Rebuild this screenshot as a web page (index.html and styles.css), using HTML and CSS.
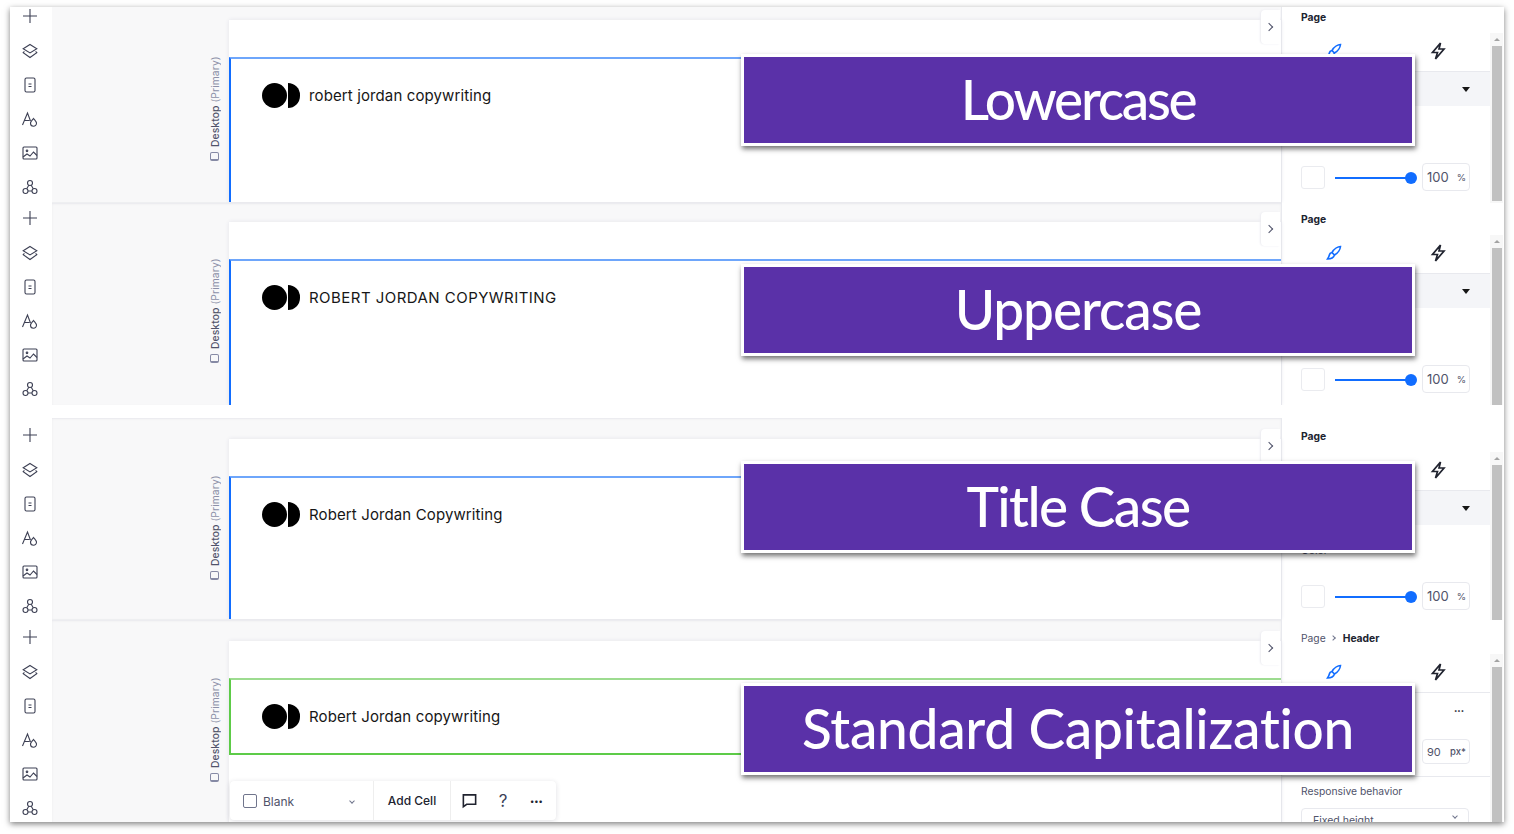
FILE: index.html
```html
<!DOCTYPE html>
<html lang="en">
<head>
<meta charset="utf-8">
<title>Header capitalization comparison</title>
<link rel="stylesheet" href="styles.css">
</head>
<body>
<svg class="sprite" aria-hidden="true">
  <symbol id="i-plus" viewBox="0 0 18 18"><path d="M9 2v14M2 9h14"/></symbol>
  <symbol id="i-layers" viewBox="0 0 18 18"><path d="M9 2.500l6.800 4.200L9 10.900 2.200 6.700zM3.400 9.400L2.200 10.600 9 15.500l6.800-4.900-1.200-1.200"/></symbol>
  <symbol id="i-page" viewBox="0 0 18 18"><rect x="4" y="2" width="10" height="14" rx="1.500"/><path d="M7.500 8h3M7.500 10.500h3"/></symbol>
  <symbol id="i-type" viewBox="0 0 18 18"><path d="M1.500 15L6.500 3l3 8M3.500 10.500h5"/><path d="M12.500 8.500c1.500 2 3 3.200 3 4.800a3 3 0 0 1-6 0c0-1.600 1.500-2.800 3-4.800z"/></symbol>
  <symbol id="i-image" viewBox="0 0 18 18"><rect x="2" y="3" width="14" height="12" rx="1"/><circle cx="6" cy="6.800" r=".8"/><path d="M2 13l4-3 3 2 3.500-4 3.500 3.500"/></symbol>
  <symbol id="i-apps" viewBox="0 0 18 18"><circle cx="9" cy="5" r="2.500"/><circle cx="4.500" cy="13" r="2.500"/><circle cx="13.500" cy="13" r="2.500"/><path d="M7.800 7.200L5.700 10.800M10.200 7.200l2.100 3.600M7 13h4"/></symbol>
  <symbol id="i-brush" viewBox="0 0 18 18"><path d="M15.500 2.500c-2.500.2-6.500 2.500-8.500 6l2.500 2.500c3.500-2 5.800-6 6-8.500zM7 8.500c-2 .3-2.500 1.500-2.800 3-.2 1-.7 2-1.700 3.500 3 0 6-1 7-4"/></symbol>
  <symbol id="i-bolt" viewBox="0 0 18 18"><path d="M11.500 1L3.500 10.500h5L6.500 17l8.500-10h-5z"/></symbol>
  <symbol id="i-comment" viewBox="0 0 18 18"><path d="M2.500 3h13v10H6l-3.500 2.500z"/></symbol>
</svg>

<main class="window">

  <section class="panel p1">
    <nav class="rail">
      <svg class="ico"><use href="#i-plus"/></svg><svg class="ico"><use href="#i-layers"/></svg><svg class="ico"><use href="#i-page"/></svg><svg class="ico"><use href="#i-type"/></svg><svg class="ico"><use href="#i-image"/></svg><svg class="ico"><use href="#i-apps"/></svg>
    </nav>
    <div class="canvas">
      <div class="device"><span class="device-ico"></span><span class="device-text"><b>Desktop</b> (Primary)</span></div>
      <div class="card">
        <header class="site-header blue">
          <span class="logo"><i class="dot"></i><i class="half"></i></span>
          <span class="brand">robert jordan copywriting</span>
        </header>
      </div>
      <button class="collapse"><span class="chev"></span></button>
    </div>
    <aside class="props">
      <div class="props-main">
        <div class="crumb"><b>Page</b></div>
        <div class="tabs"><span class="tab"><svg class="tab-ico brush"><use href="#i-brush"/></svg></span><span class="tab"><svg class="tab-ico bolt"><use href="#i-bolt"/></svg></span></div>
        <div class="select-row"><span class="caret"></span></div>
        <div class="color-label">Color</div>
        <div class="opacity-row">
          <span class="swatch"></span>
          <span class="slider"><i class="knob"></i></span>
          <span class="num"><span>100</span><small>%</small></span>
        </div>
      </div>
      <div class="scrollbar"><span class="arrow"></span><span class="thumb"></span></div>
    </aside>
  </section>

  <section class="panel p2">
    <nav class="rail">
      <svg class="ico"><use href="#i-plus"/></svg><svg class="ico"><use href="#i-layers"/></svg><svg class="ico"><use href="#i-page"/></svg><svg class="ico"><use href="#i-type"/></svg><svg class="ico"><use href="#i-image"/></svg><svg class="ico"><use href="#i-apps"/></svg>
    </nav>
    <div class="canvas">
      <div class="device"><span class="device-ico"></span><span class="device-text"><b>Desktop</b> (Primary)</span></div>
      <div class="card">
        <header class="site-header blue">
          <span class="logo"><i class="dot"></i><i class="half"></i></span>
          <span class="brand brand-upper">ROBERT JORDAN COPYWRITING</span>
        </header>
      </div>
      <button class="collapse"><span class="chev"></span></button>
    </div>
    <aside class="props">
      <div class="props-main">
        <div class="crumb"><b>Page</b></div>
        <div class="tabs"><span class="tab"><svg class="tab-ico brush"><use href="#i-brush"/></svg></span><span class="tab"><svg class="tab-ico bolt"><use href="#i-bolt"/></svg></span></div>
        <div class="select-row"><span class="caret"></span></div>
        <div class="color-label">Color</div>
        <div class="opacity-row">
          <span class="swatch"></span>
          <span class="slider"><i class="knob"></i></span>
          <span class="num"><span>100</span><small>%</small></span>
        </div>
      </div>
      <div class="scrollbar"><span class="arrow"></span><span class="thumb"></span></div>
    </aside>
  </section>

  <section class="panel p3">
    <nav class="rail">
      <svg class="ico"><use href="#i-plus"/></svg><svg class="ico"><use href="#i-layers"/></svg><svg class="ico"><use href="#i-page"/></svg><svg class="ico"><use href="#i-type"/></svg><svg class="ico"><use href="#i-image"/></svg><svg class="ico"><use href="#i-apps"/></svg>
    </nav>
    <div class="canvas">
      <div class="device"><span class="device-ico"></span><span class="device-text"><b>Desktop</b> (Primary)</span></div>
      <div class="card">
        <header class="site-header blue">
          <span class="logo"><i class="dot"></i><i class="half"></i></span>
          <span class="brand">Robert Jordan Copywriting</span>
        </header>
      </div>
      <button class="collapse"><span class="chev"></span></button>
    </div>
    <aside class="props">
      <div class="props-main">
        <div class="crumb"><b>Page</b></div>
        <div class="tabs"><span class="tab"><svg class="tab-ico brush"><use href="#i-brush"/></svg></span><span class="tab"><svg class="tab-ico bolt"><use href="#i-bolt"/></svg></span></div>
        <div class="select-row"><span class="caret"></span></div>
        <div class="color-label">Color</div>
        <div class="opacity-row">
          <span class="swatch"></span>
          <span class="slider"><i class="knob"></i></span>
          <span class="num"><span>100</span><small>%</small></span>
        </div>
      </div>
      <div class="scrollbar"><span class="arrow"></span><span class="thumb"></span></div>
    </aside>
  </section>

  <section class="panel p4">
    <nav class="rail">
      <svg class="ico"><use href="#i-plus"/></svg><svg class="ico"><use href="#i-layers"/></svg><svg class="ico"><use href="#i-page"/></svg><svg class="ico"><use href="#i-type"/></svg><svg class="ico"><use href="#i-image"/></svg><svg class="ico"><use href="#i-apps"/></svg>
    </nav>
    <div class="canvas">
      <div class="device"><span class="device-ico"></span><span class="device-text"><b>Desktop</b> (Primary)</span></div>
      <div class="card">
        <header class="site-header green">
          <span class="logo"><i class="dot"></i><i class="half"></i></span>
          <span class="brand">Robert Jordan copywriting</span>
        </header>
        <div class="toolbar">
          <div class="tool tool-blank"><span class="check"></span><span class="blank-label">Blank</span><span class="mini-chev"></span></div>
          <div class="tool tool-add">Add Cell</div>
          <div class="tool tool-icons"><svg class="tb-ico"><use href="#i-comment"/></svg><span class="help">?</span><span class="dots">&#8226;&#8226;&#8226;</span></div>
        </div>
      </div>
      <button class="collapse"><span class="chev"></span></button>
    </div>
    <aside class="props">
      <div class="props-main">
        <div class="crumb"><span class="crumb-parent">Page</span><span class="crumb-sep"></span><b>Header</b></div>
        <div class="tabs"><span class="tab"><svg class="tab-ico brush"><use href="#i-brush"/></svg></span><span class="tab"><svg class="tab-ico bolt"><use href="#i-bolt"/></svg></span></div>
        <div class="size-head"><span class="dots small">&#8226;&#8226;&#8226;</span></div>
        <div class="size-row"><span class="num num-px"><span>90</span><small>px*</small></span></div>
        <div class="resp-label">Responsive behavior</div>
        <div class="resp-select"><span class="resp-value">Fixed height</span><span class="mini-chev"></span></div>
      </div>
      <div class="scrollbar"><span class="arrow"></span><span class="thumb"></span></div>
    </aside>
  </section>

  <div class="tag tag1">Lowercase</div>
  <div class="tag tag2">Uppercase</div>
  <div class="tag tag3">Title Case</div>
  <div class="tag tag4">Standard Capitalization</div>
</main>
</body>
</html>
```

FILE: styles.css
```css
* { box-sizing: border-box; }
html, body { margin: 0; height: 100%; background: #fff; overflow: hidden; }
body { padding: 7px 10px 0; font-family: Inter, "Noto Sans", sans-serif; color: #20232f; }
.sprite { display: none; }

.window {
  position: relative;
  width: 1494px;
  height: 815px;
  background: #fff;
  box-shadow: 0 2px 6px rgba(0, 0, 0, .5);
  display: flex;
  flex-direction: column;
}

.panel {
  --o: 0px;
  display: grid;
  grid-template-columns: 42px 1fr 223px;
  height: 202px;
  overflow: hidden;
  flex: none;
}
.p1 { height: 196px; }
.p2 { --o: 6px; }
.p3 { --o: 8px; margin-top: 13px; }
.p4 { --o: 8px; }

/* left rail */
.rail {
  display: flex;
  flex-direction: column;
  align-items: center;
  padding-top: var(--o);
  padding-right: 2px;
  gap: 16px;
  background: #fff;
}
.ico {
  width: 18px;
  height: 18px;
  flex: none;
  fill: none;
  stroke: #3d4054;
  stroke-width: 1.100;
}
.ico:first-child { margin-bottom: 1px; }

/* canvas */
.canvas {
  position: relative;
  display: flex;
  padding-left: 157px;
  padding-top: var(--o);
  background: #f8f8f9;
}
.p1 .canvas, .p3 .canvas { border-bottom: 1px solid #eeeff1; }
.p2 .canvas, .p3 .canvas, .p4 .canvas { box-shadow: inset 0 1px 2px #e8e8ec; }

.device {
  flex: none;
  width: 12px;
  height: 104px;
  margin-top: 50px;
  margin-right: 8px;
  display: flex;
  align-items: center;
  gap: 5px;
  writing-mode: vertical-rl;
  transform: rotate(180deg);
  font-size: 10.300px;
  letter-spacing: .1px;
  line-height: 12px;
  color: #8c90a8;
  white-space: nowrap;
}
.device b { font-weight: 500; color: #50536a; }
.device-ico {
  flex: none;
  width: 9px;
  height: 9px;
  border: 1px solid #868aa5;
  border-top-width: 2px;
  border-radius: 2px;
}

.card {
  flex: 1;
  margin-top: 13px;
  padding-top: 37px;
  background: #fff;
  box-shadow: 0 0 4px #e3e3ea;
  display: flex;
  flex-direction: column;
}
.site-header {
  display: flex;
  align-items: flex-start;
  padding: 24px 0 0 31px;
  flex: 1;
  border-top: 2px solid #6ea6fb;
  border-left: 2px solid #116dff;
}
.site-header.green {
  flex: none;
  height: 77px;
  border: 2px solid #5dcb48;
  border-top-color: #9ddc90;
  border-right: 0;
}
.logo { display: flex; gap: 1px; flex: none; }
.dot { width: 25px; height: 25px; border-radius: 50%; background: #000; }
.half { width: 12px; height: 25px; border-radius: 0 13px 13px 0; background: #000; }
.brand { margin-left: 9px; font-size: 15px; letter-spacing: .12px; line-height: 25px; color: #161616; white-space: nowrap; }
.brand-upper { letter-spacing: .46px; }

.collapse {
  position: absolute;
  right: 1px;
  top: calc(var(--o) + 3px);
  width: 19px;
  height: 34px;
  padding: 0;
  border: 0;
  border-radius: 4px 0 0 4px;
  background: #fff;
  box-shadow: -1px 0 2px #ececf1;
}
.chev {
  display: block;
  width: 6px;
  height: 6px;
  margin: 0 0 0 5px;
  border-top: 1.200px solid #50536a;
  border-right: 1.200px solid #50536a;
  transform: rotate(45deg);
}

/* toolbar */
.toolbar {
  margin-top: 26px;
  width: 326px;
  height: 39px;
  display: flex;
  gap: 1px;
  background: #eee;
  border-radius: 4px;
  box-shadow: 0 1px 5px rgba(40, 40, 70, .15);
  overflow: hidden;
  align-self: flex-start;
  margin-left: 1px;
  font-size: 12px;
  font-weight: 500;
  color: #3b4057;
}
.tool { background: #fff; display: flex; align-items: center; flex: none; }
.tool-blank { width: 143px; padding-left: 13px; }
.check { width: 14px; height: 14px; border: 1.500px solid #70758c; border-radius: 2px; }
.blank-label { margin-left: 6px; color: #50536a; font-weight: 400; padding-top: 2px; }
.mini-chev {
  width: 4px;
  height: 4px;
  border-right: 1px solid #70758c;
  border-bottom: 1px solid #70758c;
  transform: rotate(45deg);
}
.tool-blank .mini-chev { margin-left: 56px; }
.tool-add { width: 76px; justify-content: center; color: #20232f; }
.tool-icons { flex: 1; padding-left: 10px; }
.tb-ico { width: 17px; height: 17px; fill: none; stroke: #20232f; stroke-width: 1.700; }
.help { margin-left: 18px; font-size: 17px; font-weight: 400; width: 14px; text-align: center; }
.dots { margin-left: 20px; font-size: 8px; letter-spacing: 0; color: #20232f; }

/* right panel */
.props {
  display: grid;
  grid-template-columns: 1fr 13px;
  padding-right: 1px;
  padding-top: var(--o);
  border-left: 1px solid #e8e9ee;
  background: #fff;
  font-size: 11px;
  color: #50536a;
}
.props-main { min-width: 0; }
.crumb {
  height: 20px;
  line-height: 20px;
  padding-left: 19px;
  font-size: 10.300px;
  display: flex;
  align-items: center;
}
.crumb b { font-weight: 700; color: #20232f; }
.crumb-sep {
  width: 4px;
  height: 4px;
  margin: 0 8px 0 5px;
  border-top: 1px solid #70758c;
  border-right: 1px solid #70758c;
  transform: rotate(45deg);
}
.tabs { height: 45px; display: flex; border-bottom: 1px solid #e8e9ee; }
.tab { flex: 1; display: flex; justify-content: center; padding-top: 15px; }
.tab-ico { width: 18px; height: 18px; fill: none; }
.brush { stroke: #116dff; stroke-width: 1.600; }
.bolt { stroke: #20232f; stroke-width: 1.700; }

.select-row {
  height: 34px;
  background: #f4f5f8;
  display: flex;
  justify-content: flex-end;
  align-items: center;
  padding-right: 20px;
}
.caret {
  width: 0;
  height: 0;
  border-left: 4px solid transparent;
  border-right: 4px solid transparent;
  border-top: 5px solid #161616;
}
.color-label { margin: 19px 0 0 19px; height: 14px; line-height: 14px; font-size: 10.500px; }
.opacity-row {
  margin-top: 24px;
  padding-left: 19px;
  height: 28px;
  display: flex;
  align-items: center;
}
.swatch { width: 24px; height: 23px; margin-top: 1px; border: 1px solid #eaebef; border-radius: 3px; flex: none; }
.slider {
  position: relative;
  width: 76px;
  height: 2px;
  margin-left: 10px;
  margin-top: 1px;
  background: #116dff;
  flex: none;
}
.knob {
  position: absolute;
  right: -6px;
  top: -5px;
  width: 12px;
  height: 12px;
  border-radius: 50%;
  background: #116dff;
}
.num {
  width: 48px;
  height: 28px;
  margin-left: 11px;
  padding: 0 3px 0 4px;
  flex: none;
  display: flex;
  justify-content: space-between;
  align-items: center;
  border: 1px solid #e8e9ee;
  border-radius: 4px;
  font-size: 13px;
}
.num small { font-size: 9.500px; }

.size-head { height: 46px; padding: 8px 26px 0 0; text-align: right; }
.dots.small { margin: 0; font-size: 6px; line-height: 20px; }
.size-row { height: 38px; padding-left: 129px; border-bottom: 1px solid #e8e9ee; }
.num-px { height: 25px; margin-left: 11px; font-size: 11px; }
.num-px small { font-weight: 500; }
.resp-label { margin: 7px 0 0 19px; line-height: 14px; font-size: 10.300px; }
.resp-select {
  margin: 10px 21px 0 19px;
  height: 30px;
  padding: 5px 11px;
  border: 1px solid #e8e9ee;
  border-radius: 4px;
  display: flex;
  justify-content: space-between;
  font-size: 10.500px;
}

.scrollbar { margin-top: 26px; display: flex; flex-direction: column; align-items: center; background: #f7f7f7; }
.arrow {
  margin: 5px 0 5px;
  width: 0;
  height: 0;
  flex: none;
  border-left: 3px solid transparent;
  border-right: 3px solid transparent;
  border-bottom: 3px solid #a3a3a3;
}
.thumb { flex: 1; width: 10px; background: #c1c1c1; }
.p1 .thumb { margin-bottom: 2px; }

/* overlay labels */
.tag {
  position: absolute;
  left: 731px;
  width: 674px;
  height: 92px;
  border: 3px solid #fff;
  background: #5a31a8;
  box-shadow: 1px 3px 5px rgba(0, 0, 0, .55);
  color: #fff;
  font-family: Lato, "Open Sans", sans-serif;
  font-size: 55px;
  font-weight: 500;
  line-height: 85px;
  text-align: center;
}
.tag1 { top: 47px; letter-spacing: -2.300px; }
.tag2 { top: 257px; letter-spacing: -1.100px; }
.tag3 { top: 454px; letter-spacing: -1.600px; }
.tag4 { top: 676px; letter-spacing: -.3px; }
```
